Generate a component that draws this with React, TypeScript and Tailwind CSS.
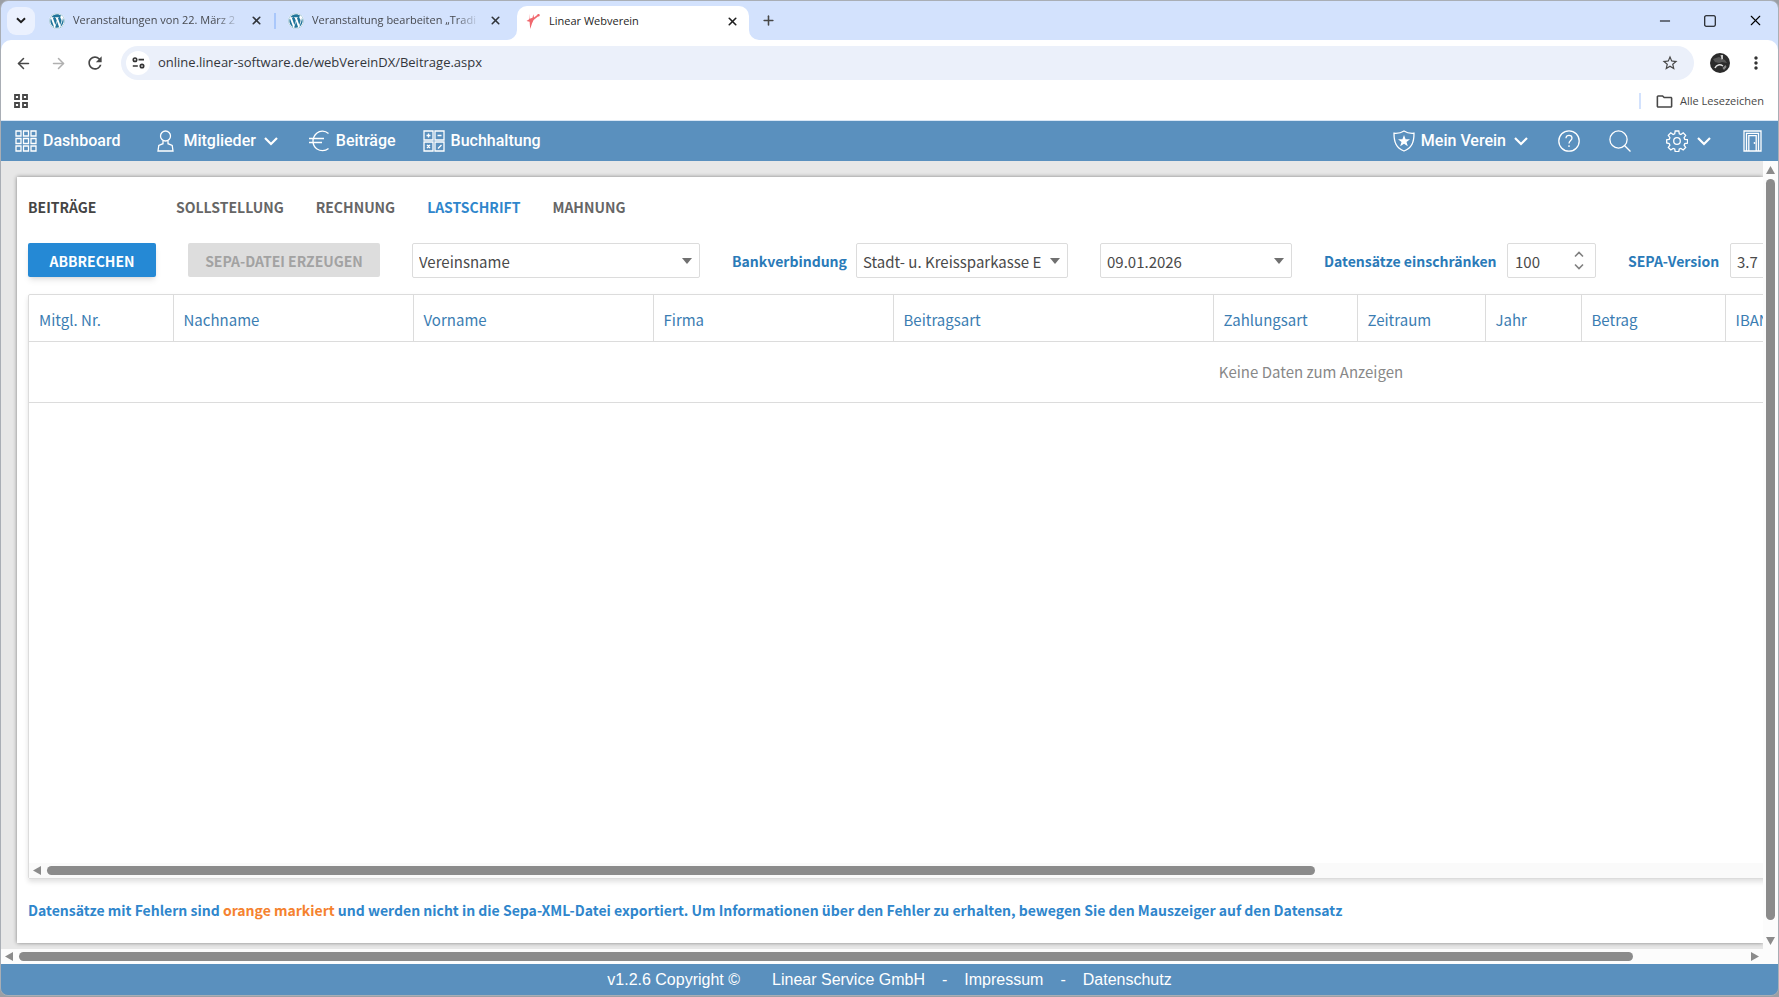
import type { ReactNode } from "react";
import { ArrowLeft, ArrowRight, Minus, Plus, Square, X } from "lucide-react";
import { FaWordpress } from "react-icons/fa";
import { MdMoreVert, MdOutlineFolder, MdRefresh, MdStarBorder } from "react-icons/md";

const columns = [
  { title: "Mitgl. Nr.", width: "w-36" },
  { title: "Nachname", width: "w-60" },
  { title: "Vorname", width: "w-60" },
  { title: "Firma", width: "w-60" },
  { title: "Beitragsart", width: "w-80" },
  { title: "Zahlungsart", width: "w-36" },
  { title: "Zeitraum", width: "w-32" },
  { title: "Jahr", width: "w-24" },
  { title: "Betrag", width: "w-36" },
  { title: "IBAN", width: "w-[868px]" },
];

function Tab({ title }: { title: string }) {
  return (
    <div className="flex h-full w-[237px] shrink-0 items-center gap-2 pl-3 pr-[11px]">
      <FaWordpress className="size-4 shrink-0 rounded-full bg-white text-[#21759b]" />
      <span className="w-[168px] overflow-hidden whitespace-nowrap text-[#474a50] mask-r-from-85%">{title}</span>
      <button aria-label="Tab schließen" className="ml-auto shrink-0 text-[#30343a]">
        <X size={13} strokeWidth={3} />
      </button>
    </div>
  );
}

function TabStrip() {
  return (
    <div className="flex h-[39px] shrink-0 items-center bg-[#d3e2fd] pl-[6px] font-['Open_Sans',sans-serif] text-[11px]">
      <button aria-label="Tabs durchsuchen" className="flex size-7 shrink-0 items-center justify-center rounded-[9px] bg-[#ebf1fe]">
        <svg width="10" height="7" viewBox="0 0 10 7" fill="none" stroke="#1f1f1f" strokeWidth="2"><path d="M1 1.200l4 4 4-4" /></svg>
      </button>
      <div className="ml-0.5 flex h-full items-center">
        <Tab title="Veranstaltungen von 22. März 2" />
        <span className="h-4 w-0.5 bg-[#a9c7fb]" />
        <Tab title="Veranstaltung bearbeiten „Tradi" />
      </div>
      <div className="relative ml-1 flex h-[34px] w-[232px] items-center self-end rounded-t-[10px] bg-white pb-1 pl-2 pr-[10px]">
        <svg className="absolute -left-[10px] bottom-0" width="10" height="10"><path d="M10 0v10H0A10 10 0 0 0 10 0" fill="#fff" /></svg>
        <svg className="absolute -right-[10px] bottom-0" width="10" height="10"><path d="M0 0v10h10A10 10 0 0 1 0 0" fill="#fff" /></svg>
        <svg width="16" height="18" viewBox="0 0 16 18" fill="#f0686e">
          <path d="M4 1.500l.6 5.300L7.500 5.700l.8-3.500.7 3.200 3.200-2.300a1.300 1.300 0 1 1 .8 1.300L8.600 8 7 11.500 5.200 17 4.600 9.800 1.500 9l2.700-1.700z" />
        </svg>
        <span className="ml-2 text-[#1f1f1f]">Linear Webverein</span>
        <button aria-label="Tab schließen" className="ml-auto text-[#1f1f1f]"><X size={13} strokeWidth={3} /></button>
      </div>
      <button aria-label="Neuer Tab" className="ml-3 text-[#474747]"><Plus size={15} strokeWidth={2.500} /></button>
      <div className="ml-auto flex items-center gap-[30px] pr-[14px] text-black">
        <button aria-label="Minimieren"><Minus size={16} strokeWidth={1.500} /></button>
        <button aria-label="Maximieren"><Square size={14} strokeWidth={1.800} /></button>
        <button aria-label="Schließen"><X size={17} strokeWidth={1.600} /></button>
      </div>
    </div>
  );
}

function AddressBar() {
  return (
    <div className="shrink-0 bg-[#d3e2fd] font-['Open_Sans',sans-serif]">
      <div className="flex h-[46px] items-center rounded-t-[10px] bg-white pr-3">
        <button aria-label="Zurück" className="ml-[14px] text-[#474747]"><ArrowLeft size={17} strokeWidth={2.200} /></button>
        <button aria-label="Vorwärts" className="ml-[18px] text-[#b0b0b0]"><ArrowRight size={17} strokeWidth={2.200} /></button>
        <button aria-label="Neu laden" className="ml-[18px] text-[#474747]"><MdRefresh size={20} /></button>
        <div className="ml-4 flex h-[34px] flex-1 items-center rounded-full bg-[#ebf0fa] pl-[5px] pr-[15px]">
          <button aria-label="Website-Informationen" className="flex size-6 items-center justify-center rounded-full bg-white">
            <svg width="13" height="12" viewBox="0 0 13 12" fill="none" stroke="#333" strokeWidth="1.700">
              <circle cx="3" cy="2.700" r="1.700" /><path d="M6.500 2.700h5.500M.8 9h5" /><circle cx="10" cy="9" r="1.700" />
            </svg>
          </button>
          <input
            aria-label="Adresse"
            className="ml-2 flex-1 bg-transparent text-[13px] text-[#33363b] outline-none"
            defaultValue="online.linear-software.de/webVereinDX/Beitrage.aspx"
          />
          <button aria-label="Lesezeichen hinzufügen" className="text-[#474747]"><MdStarBorder size={18} /></button>
        </div>
        <button aria-label="Profil" className="ml-4">
          <svg width="20" height="20" viewBox="0 0 20 20">
            <circle cx="10" cy="10" r="10" fill="#2b2b2b" />
            <path d="M3 6l6-2 6 3 2 3-5-1-3 1-4-1z" fill="#565656" />
            <path d="M10.500 2h2.500v4l-1.500.5z" fill="#c9c9c9" />
            <path d="M5 15c1.500-3.500 5-4 8-2" fill="none" stroke="#ddd" strokeWidth="1.500" />
            <path d="M12.500 15l3-3 1 2-2.500 3z" fill="#888" />
          </svg>
        </button>
        <button aria-label="Menü" className="ml-4 text-[#333]"><MdMoreVert size={20} /></button>
      </div>
      <div className="flex h-[34px] items-center bg-white pl-[13px] pr-[14px] pb-1">
        <button aria-label="Apps">
          <svg width="14" height="14" viewBox="0 0 14 14" fill="none" stroke="#474747" strokeWidth="1.800">
            <path d="M1 1h4v4H1zM9 1h4v4H9zM1 9h4v4H1zM9 9h4v4H9z" />
          </svg>
        </button>
        <span className="ml-auto h-4 w-0.5 bg-[#d3e2fd]" />
        <button className="ml-[14px] flex items-center gap-[6px] text-[11px] text-[#474747]">
          <MdOutlineFolder size={19} />
          Alle Lesezeichen
        </button>
      </div>
    </div>
  );
}

function Chevron() {
  return (
    <svg width="14" height="9" viewBox="0 0 14 9" fill="none" stroke="currentColor" strokeWidth="2.200"><path d="M1 1l6 6 6-6" /></svg>
  );
}

function NavIcon({ children, width = 22 }: { children: ReactNode; width?: number }) {
  return (
    <svg width={width} height="22" viewBox={`0 0 ${width} 22`} fill="none" stroke="currentColor" strokeWidth="1.300">{children}</svg>
  );
}

function NavBar() {
  return (
    <nav className="flex h-10 shrink-0 items-center bg-[#5a90be] pl-[14px] pr-4 font-[Roboto,sans-serif] text-base font-medium text-white">
      <a href="#dashboard" className="flex items-center gap-[6px]">
        <NavIcon>
          <path d="M1 1h5v5H1zM8.500 1h5v5h-5zM16 1h5v5h-5zM1 8.500h5v5H1zM8.500 8.500h5v5h-5zM16 8.500h5v5h-5zM1 16h5v5H1zM8.500 16h5v5h-5zM16 16h5v5h-5z" />
        </NavIcon>
        Dashboard
      </a>
      <button className="ml-[37px] flex items-center gap-2">
        <NavIcon width={17}>
          <circle cx="8.500" cy="6" r="5" />
          <path d="M6 10.500v3.200L1.800 15.500 1 21h15l-.8-5.500-4.200-1.800v-3.200" />
        </NavIcon>
        <span className="pl-px">Mitglieder</span>
        <Chevron />
      </button>
      <a href="#beitraege" className="ml-[30px] flex items-center gap-[6px]">
        <NavIcon><path d="M20.500 3.500C17 .5 12 .5 9 3s-4 5-4 8 1 6 4 8 8 2.500 11.500-.5M1 8.500h15M1 12.500h13" /></NavIcon>
        Beiträge
      </a>
      <a href="#buchhaltung" className="ml-[27px] flex items-center gap-[6px]">
        <NavIcon>
          <path d="M1 1h9v9H1zM12 1h9v9h-9zM1 12h9v9H1zM12 12h9v9h-9zM3.500 5.500h4M5.500 3.500v4M14.500 5.500h4M4 15l3 3M7 15l-3 3M15 18.500l3.500-3.500" />
        </NavIcon>
        Buchhaltung
      </a>
      <button className="ml-auto flex items-center gap-[6px]">
        <NavIcon>
          <path d="M11 1C8 3 4.500 3.500 1 3.200 1 12 3 18 11 21 19 18 21 12 21 3.200 17.500 3.500 14 3 11 1z" />
          <path fill="currentColor" stroke="none" d="M11 5l1.600 4.200 4.400.1-3.500 2.700 1.300 4.300L11 13.800l-3.800 2.500L8.500 12 5 9.300l4.400-.1z" />
        </NavIcon>
        Mein Verein
        <span className="ml-0.5"><Chevron /></span>
      </button>
      <button aria-label="Hilfe" className="ml-[30px]">
        <NavIcon>
          <circle cx="11" cy="11" r="10.200" />
          <path d="M8 8.300C8 6.400 9.300 5.300 11 5.300s3 1.100 3 2.800c0 2.300-3 2.600-3 5.400M11 15.300v1.700" />
        </NavIcon>
      </button>
      <button aria-label="Suchen" className="ml-[29px]"><NavIcon><circle cx="9.500" cy="9.500" r="8.600" /><path d="M15.700 15.700L21.500 21.500" /></NavIcon></button>
      <button aria-label="Einstellungen" className="ml-[35px] flex items-center gap-[9px]">
        <NavIcon>
          <circle cx="11" cy="11" r="3.300" />
          <path d="M9.200 1h3.600l.5 2.800 1.600.7 2.300-1.700 2.500 2.500-1.600 2.400.7 1.600 2.700.4v3.400l-2.700.5-.7 1.600 1.600 2.300-2.500 2.500-2.300-1.600-1.600.6-.5 2.700H9.200l-.5-2.700-1.600-.6-2.300 1.600-2.500-2.500 1.600-2.300-.7-1.600L.7 13V9.700l2.500-.4.7-1.600-1.600-2.400 2.500-2.500 2.300 1.700 1.600-.7z" />
        </NavIcon>
        <Chevron />
      </button>
      <button aria-label="Abmelden" className="ml-8">
        <NavIcon width={19}>
          <path d="M1 1h17v20H1zM3.500 21V3.300h12V21M5.800 21V5.600h7.400V21" />
          <circle cx="11.500" cy="13" r=".9" fill="currentColor" stroke="none" />
        </NavIcon>
      </button>
    </nav>
  );
}

function SelectBox({ id, label, value, width }: { id: string; label: string; value: string; width: string }) {
  return (
    <div className={`relative shrink-0 ${width}`}>
      <select id={id} aria-label={label} className="h-[35px] w-full appearance-none rounded-xs border border-[#dcdcdc] bg-white pl-[6px] pr-6 pt-0.5 text-[15px] text-[#4a4a4a] outline-none">
        <option>{value}</option>
      </select>
      <svg className="pointer-events-none absolute right-2 top-[15px]" width="10" height="6" fill="#707070"><path d="M0 0h10L5 6z" /></svg>
    </div>
  );
}

function FilterBar() {
  return (
    <div className="flex items-start gap-8 whitespace-nowrap text-sm">
      <button className="h-[34px] w-32 shrink-0 rounded-xs bg-[#2589d5] pt-0.5 font-bold text-white shadow-md">ABBRECHEN</button>
      <button disabled className="h-[34px] w-48 shrink-0 rounded-xs bg-[#dddddd] pt-0.5 font-bold text-[#a2a2a2]">SEPA-DATEI ERZEUGEN</button>
      <SelectBox id="verein" label="Verein" value="Vereinsname" width="w-72" />
      <div className="flex shrink-0 items-center">
        <label htmlFor="bank" className="w-[124px] font-bold text-[#2a7ab8]">Bankverbindung</label>
        <SelectBox id="bank" label="Bankverbindung" value="Stadt- u. Kreissparkasse E" width="w-[212px]" />
      </div>
      <SelectBox id="datum" label="Datum" value="09.01.2026" width="w-48" />
      <div className="flex shrink-0 items-center">
        <label htmlFor="limit" className="w-[183px] font-bold text-[#2a7ab8]">Datensätze einschränken</label>
        <div className="relative">
          <input id="limit" defaultValue="100" className="h-[35px] w-[89px] rounded-xs border border-[#dcdcdc] pl-[7px] pt-0.5 text-[15px] text-[#4a4a4a] outline-none" />
          <svg className="absolute right-3 top-2" width="10" height="19" fill="none" stroke="#808080" strokeWidth="1.600"><path d="M1 5.500l4-4 4 4M1 13.500l4 4 4-4" /></svg>
        </div>
      </div>
      <div className="flex shrink-0 items-center">
        <label htmlFor="version" className="w-[102px] font-bold text-[#2a7ab8]">SEPA-Version</label>
        <SelectBox id="version" label="SEPA-Version" value="3.7" width="w-24" />
      </div>
    </div>
  );
}

function DataGrid() {
  return (
    <div className="-mr-2 flex min-h-0 flex-1 flex-col rounded-xs border border-[#dcdcdc] shadow-[0_3px_5px_rgba(0,0,0,0.12)]">
      <div className="flex-1 overflow-hidden">
        <table className="w-[2564px] table-fixed border-collapse">
          <thead>
            <tr className="h-[46px] border-b border-[#dcdcdc]">
              {columns.map((c) => (
                <th key={c.title} className={`border-r border-[#dcdcdc] px-[10px] pt-1 text-left font-normal text-[#3b7db2] ${c.width}`}>{c.title}</th>
              ))}
            </tr>
          </thead>
          <tbody>
            <tr className="h-[61px] border-b border-[#dcdcdc]">
              <td colSpan={columns.length} className="pt-0.5 text-center text-[#888]">Keine Daten zum Anzeigen</td>
            </tr>
          </tbody>
        </table>
      </div>
      <div className="flex h-[15px] items-center bg-[#fafafa] pl-1">
        <svg width="8" height="9" fill="#8b8b8b"><path d="M8 0v9L0 4.500z" /></svg>
        <div className="ml-[6px] h-[9px] w-[73%] rounded-full bg-[#8b8b8b]" />
      </div>
    </div>
  );
}

const tabs = ["SOLLSTELLUNG", "RECHNUNG", "LASTSCHRIFT", "MAHNUNG"];

export default function App() {
  return (
    <div className="h-screen overflow-hidden bg-[#9b9fa5] pb-px">
      <div className="flex h-full flex-col overflow-hidden rounded-lg border border-[#a9aeb5]">
        <TabStrip />
        <AddressBar />
        <div className="h-px shrink-0 bg-[#d8e6f5]" />
        <NavBar />
        <main className="flex min-h-0 flex-1 bg-[#fcfcfc] font-['Noto_Sans_CJK_SC',sans-serif] text-[15px]">
          <div className="flex min-w-0 flex-1 flex-col">
            <div className="flex min-h-0 flex-1 flex-col overflow-hidden bg-[#e7e7e7] pb-[6px] pl-4 pt-4">
              <section className="flex min-h-0 flex-1 flex-col bg-white pl-[11px] pt-4 shadow-[0_0_4px_rgba(0,0,0,0.45)]">
                <div className="flex h-7 items-center text-sm font-bold text-[#666]">
                  <h1 className="w-[148px] text-[#444]">BEITRÄGE</h1>
                  <div className="flex gap-8">
                    {tabs.map((t) => (
                      <a key={t} href={`#${t.toLowerCase()}`} className={t === "LASTSCHRIFT" ? "text-[#2f86cc]" : ""}>{t}</a>
                    ))}
                  </div>
                </div>
                <div className="h-[22px] shrink-0" />
                <FilterBar />
                <div className="h-4 shrink-0" />
                <DataGrid />
                <p className="flex h-16 shrink-0 items-center pb-0.5 text-sm font-bold text-[#2f86cc]">
                  <span>
                    Datensätze mit Fehlern sind <span className="text-[#f5822f]">orange markiert</span> und werden nicht in die Sepa-XML-Datei exportiert. Um Informationen über den Fehler zu erhalten, bewegen Sie den Mauszeiger auf den Datensatz
                  </span>
                </p>
              </section>
            </div>
            <div className="flex h-[15px] shrink-0 items-center px-1">
              <svg width="8" height="9" fill="#8b8b8b"><path d="M8 0v9L0 4.500z" /></svg>
              <div className="ml-[6px] h-[9px] w-[92%] rounded-full bg-[#8b8b8b]" />
              <svg className="ml-auto" width="8" height="9" fill="#8b8b8b"><path d="M0 0v9l8-4.500z" /></svg>
            </div>
          </div>
          <div className="flex w-[15px] flex-col items-center pb-[19px] pt-[5px]">
            <svg width="9" height="8" fill="#8b8b8b"><path d="M0 8h9L4.500 0z" /></svg>
            <div className="mt-[5px] w-[9px] flex-1 rounded-full bg-[#8b8b8b]" />
            <svg className="mt-[17px]" width="9" height="8" fill="#8b8b8b"><path d="M0 0h9L4.500 8z" /></svg>
          </div>
        </main>
        <footer className="flex h-[31px] shrink-0 items-center justify-center bg-[#5a90be] font-['Liberation_Sans',sans-serif] text-base text-white">
          <span className="mr-8">v1.2.6 Copyright ©</span>
          <a href="#linear">Linear Service GmbH</a>
          <span className="mx-[17px]">-</span>
          <a href="#impressum">Impressum</a>
          <span className="mx-[17px]">-</span>
          <a href="#datenschutz">Datenschutz</a>
        </footer>
      </div>
    </div>
  );
}
